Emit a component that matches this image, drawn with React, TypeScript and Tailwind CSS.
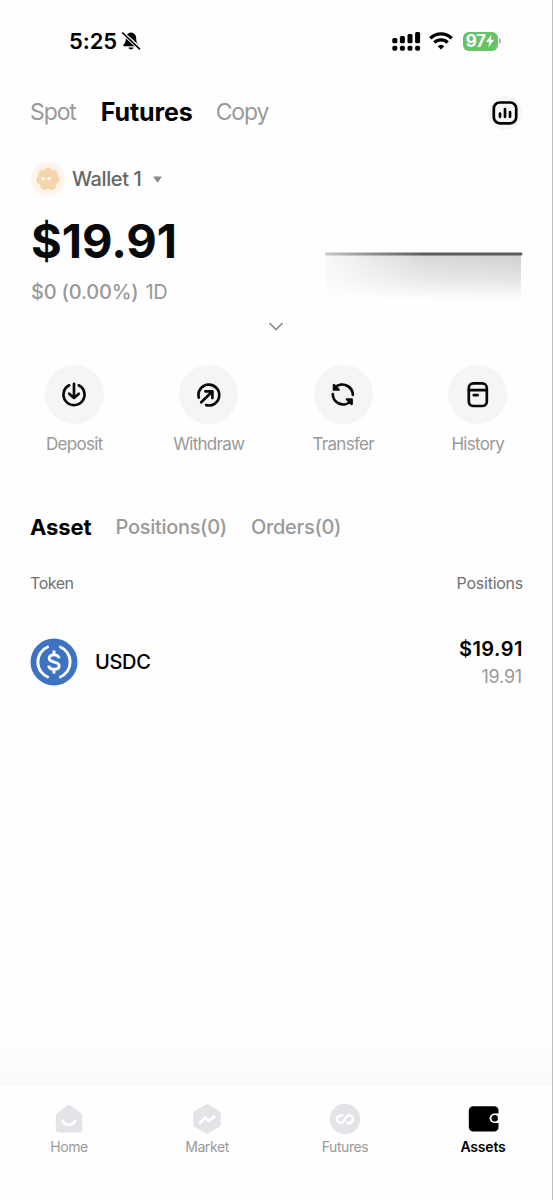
import React from 'react';

type Action = {
    label: string;
    icon: React.ReactNode;
};

type NavItem = Action & { active?: boolean };

const BellOffIcon: React.FC = () => (
    <svg width="20" height="20" viewBox="0 0 20 20" fill="none">
        <path d="M10 1.400c-3.100.4-5.200 2.600-5.200 5.800 0 3.600-.7 4.900-2.200 6.400-.7.800-.4 1.700.6 1.700h13.600c1 0 1.300-.9.6-1.700-1.500-1.500-2.200-2.800-2.200-6.400 0-3.200-2.100-5.400-5.200-5.800z" fill="black" />
        <path d="M7.400 16.500h5.200c-.4 1.200-1.300 1.900-2.600 1.900s-2.200-.7-2.600-1.900z" fill="black" />
        <path d="M1.200 1.600l17.600 16" stroke="white" strokeWidth="3.800" />
        <path d="M1.700 2l16.800 15.800" stroke="black" strokeWidth="1.700" strokeLinecap="round" />
    </svg>
);

const SignalIcon: React.FC = () => (
    <svg width="29" height="20" viewBox="0 0 29 20" fill="black">
        <rect x="0.300" y="7" width="5" height="5.200" rx="1.500" />
        <rect x="7.900" y="5" width="5" height="7.200" rx="1.500" />
        <rect x="15.500" y="3" width="5" height="9.200" rx="1.500" />
        <rect x="23.100" y="1" width="5" height="11.200" rx="1.500" />
        <rect x="0.300" y="14.800" width="5" height="5" rx="1.800" />
        <rect x="7.900" y="14.800" width="5" height="5" rx="1.800" />
        <rect x="15.500" y="14.800" width="5" height="5" rx="1.800" />
        <rect x="23.100" y="14.800" width="5" height="5" rx="1.800" />
    </svg>
);

const WifiIcon: React.FC = () => (
    <svg width="24" height="18" viewBox="0 0 24 18" fill="none" stroke="black" strokeWidth="3.300">
        <path d="M1.300 6.300a15.200 15.200 0 0 1 21.400 0" />
        <path d="M5.300 10.500a9.600 9.600 0 0 1 13.400 0" />
        <path d="M12 17.600l-3.300-3.400a4.800 4.800 0 0 1 6.600 0z" fill="black" stroke="none" />
    </svg>
);

const StatusBar: React.FC = () => (
    <div className="flex h-[82px] items-center justify-between pr-[51px] pl-[69px]">
        <div className="flex items-center gap-1">
            <span className="text-[22px] font-semibold tracking-[-0.1px]">5:25</span>
            <BellOffIcon />
        </div>
        <div className="flex items-center">
            <SignalIcon />
            <span className="ml-2">
                <WifiIcon />
            </span>
            <div className="ml-[10px] flex h-[19px] w-[35px] items-center justify-center rounded-md bg-[#65c466]">
                <span className="pt-px text-[17px] leading-none font-bold tracking-[-0.5px] text-white">97</span>
                <svg width="10" height="14" viewBox="0 0 9 14" fill="white">
                    <path d="M6 0.500L0.500 8h3.300L2.800 13.500 8.600 5.700H5.200z" />
                </svg>
            </div>
            <span className="ml-px h-[6px] w-[2px] rounded-r-full bg-[#b5b5b9]" />
        </div>
    </div>
);

const ChartIcon: React.FC = () => (
    <svg width="26" height="24" viewBox="0 0 26 24" fill="none" stroke="black">
        <rect x="1.800" y="1.500" width="22.400" height="20.800" rx="6" strokeWidth="2.700" />
        <path d="M8 12.500v3.300M13 8.200v7.600M18 11v4.800" strokeWidth="2.700" strokeLinecap="round" />
    </svg>
);

const WalletAvatar: React.FC = () => (
    <svg width="34" height="34" viewBox="0 0 34 34">
        <circle cx="17" cy="17" r="17" fill="#fdf5ed" />
        <g fill="#f6d5ac">
            <circle cx="17" cy="17.500" r="9.500" />
            <circle cx="17" cy="10" r="4.300" />
            <circle cx="22.700" cy="12" r="4" />
            <circle cx="24.700" cy="17.600" r="3.900" />
            <circle cx="20.800" cy="23.800" r="4.300" />
            <circle cx="13.700" cy="23.800" r="4.300" />
            <circle cx="9.300" cy="18" r="3.900" />
            <circle cx="11.300" cy="12" r="4" />
        </g>
        <circle cx="12.200" cy="16.600" r="1.700" fill="white" />
        <circle cx="18.200" cy="16.600" r="1.700" fill="white" />
    </svg>
);

const BalanceChart: React.FC = () => (
    <svg width="198" height="102" viewBox="0 0 198 102">
        <defs>
            <linearGradient id="line" x1="0" x2="1" y1="0" y2="0">
                <stop offset="0" stopColor="#c8c8c8" />
                <stop offset="0.250" stopColor="#8d8d8d" />
                <stop offset="0.500" stopColor="#5c5c5c" />
                <stop offset="1" stopColor="#5c5c5c" />
            </linearGradient>
            <linearGradient id="area" x1="0" x2="1" y1="0" y2="0">
                <stop offset="0" stopColor="#f8f8f8" />
                <stop offset="0.500" stopColor="#d8d8d8" />
                <stop offset="1" stopColor="#d0d0d0" />
            </linearGradient>
            <linearGradient id="fade" x1="0" x2="0" y1="0" y2="1">
                <stop offset="0" stopColor="#fefefe" stopOpacity="0" />
                <stop offset="0.500" stopColor="#fefefe" stopOpacity="0.400" />
                <stop offset="1" stopColor="#fefefe" />
            </linearGradient>
        </defs>
        <rect x="1" y="39" width="195" height="45" fill="url(#area)" />
        <rect x="1" y="39" width="195" height="45" fill="url(#fade)" />
        <rect x="0" y="36.600" width="197.500" height="2.900" rx="1.400" fill="url(#line)" />
    </svg>
);

const iconProps = {
    width: 26,
    height: 26,
    viewBox: '0 0 26 26',
    fill: 'none',
    stroke: '#08090b',
    strokeWidth: 2.7,
    strokeLinecap: 'round',
    strokeLinejoin: 'round',
} as const;

const actions: Action[] = [
    {
        label: 'Deposit',
        icon: (
            <svg {...iconProps}>
                <path d="M8.200 3.300a10.500 10.500 0 1 0 9.600 0" />
                <path d="M13 1.800v13.700M8.200 11.700l4.800 4.200 4.800-4.200" />
            </svg>
        ),
    },
    {
        label: 'Withdraw',
        icon: (
            <svg {...iconProps}>
                <path d="M2.800 15.700A10.400 10.400 0 1 1 10.200 23.100" />
                <path d="M5.200 20.300L16.100 9.700M9.400 9.300h7v6.800" />
            </svg>
        ),
    },
    {
        label: 'Transfer',
        icon: (
            <svg {...iconProps}>
                <path d="M4.600 6.200C8.100 2.200 13.300 1.500 17.600 4c3.500 2 5.100 5.200 5.200 8.800" />
                <path d="M21 18.800c-3.500 4-8.700 4.700-13 2.200-3.500-2-5.100-5.200-5.200-8.800" />
                <path d="M3.800 2.900v4.800h5z" fill="#08090b" strokeWidth="2.200" />
                <path d="M21.800 22.100v-4.800h-5z" fill="#08090b" strokeWidth="2.200" />
            </svg>
        ),
    },
    {
        label: 'History',
        icon: (
            <svg {...iconProps}>
                <rect x="3.800" y="1.400" width="18" height="22.600" rx="4.500" />
                <path d="M3.800 8.200h18M8.800 13.200h3.800" />
            </svg>
        ),
    },
];

const UsdcLogo: React.FC = () => (
    <svg width="48" height="48" viewBox="0 0 48 48" fill="none" stroke="white" strokeWidth="2.900">
        <circle cx="24" cy="24" r="23.500" fill="#3e73c4" stroke="none" />
        <path d="M18.700 8.500a16.500 16.500 0 0 0 0 31M29.300 8.500a16.500 16.500 0 0 1 0 31" />
        <path d="M24 12.600v4M24 31.400v4" />
        <path d="M29 20.300c-.4-2.300-2.200-3.400-5-3.400-2.900 0-4.800 1.300-4.800 3.400 0 5.100 10 2.400 10 7.500 0 2.300-2.100 3.500-5.200 3.500-3.200 0-5-1.300-5.300-3.700" />
    </svg>
);

const navItems: NavItem[] = [
    {
        label: 'Home',
        icon: (
            <svg width="32" height="32" viewBox="0 0 32 32" fill="none">
                <path d="M4.800 9.500L14.300 2.700a3 3 0 0 1 3.400 0l9.500 6.800q2 1.500 2 3.800v13.200a3 3 0 0 1-3 3H5.800a3 3 0 0 1-3-3V13.300q0-2.300 2-3.800z" fill="#e3e4e8" />
                <path d="M9.600 16.800c1.200 6.600 11.600 6.600 12.800 0" stroke="white" strokeWidth="2.800" />
            </svg>
        ),
    },
    {
        label: 'Market',
        icon: (
            <svg width="32" height="32" viewBox="0 0 32 32" fill="none" strokeLinejoin="round">
                <path d="M16 3.700l11.200 6.400v11.800l-11.200 6.400-11.200-6.400V10.100z" fill="#e3e4e8" stroke="#e3e4e8" strokeWidth="5" />
                <path d="M8.300 20.500l6-5.800 3.300 3.300 6.600-5" stroke="white" strokeWidth="2.900" />
            </svg>
        ),
    },
    {
        label: 'Futures',
        icon: (
            <svg width="32" height="32" viewBox="0 0 32 32" fill="none">
                <circle cx="16" cy="16" r="15.200" fill="#e3e4e8" />
                <path d="M14.500 12.200h-2.600a3.900 3.900 0 0 0 0 7.800c4.600 0 3.700-7.800 8.200-7.800a3.900 3.900 0 0 1 0 7.800h-2.600" stroke="white" strokeWidth="2.500" />
            </svg>
        ),
    },
    {
        label: 'Assets',
        active: true,
        icon: (
            <svg width="32" height="32" viewBox="0 0 32 32" fill="none">
                <path d="M6.300 3.200h21a4.200 4.200 0 0 1 4.200 4.200v17a4.200 4.200 0 0 1-4.200 4.200h-21a4.500 4.500 0 0 1-4.500-4.500V7.700a4.500 4.500 0 0 1 4.500-4.500z" fill="black" />
                <path d="M32 10.500h-4.700a4.700 4.700 0 0 0 0 9.400H32z" fill="white" />
                <circle cx="27.700" cy="15.200" r="3.200" fill="black" />
                <path d="M29.500 11.300h2M29.500 19.100h2" stroke="white" strokeWidth="1" />
            </svg>
        ),
    },
];

const App: React.FC = () => {
    return (
        <div className="flex h-[1200px] w-[553px] flex-col overflow-hidden border-r border-[#bdbdbd] bg-[#fefefe] font-['Inter',sans-serif] text-black">
            <StatusBar />

            <div className="flex h-[60px] items-center pt-px pr-[30px] pl-[30px]">
                <span className="text-[23px] tracking-[-1.1px] text-[#999]">Spot</span>
                <span className="ml-[25px] text-[25px] font-bold tracking-[-0.1px]">Futures</span>
                <span className="ml-[23px] text-[23px] tracking-[-1.1px] text-[#999]">Copy</span>
                <div className="ml-auto flex size-[34px] items-center justify-center rounded-full bg-[#f6f6f9]">
                    <ChartIcon />
                </div>
            </div>

            <div className="flex h-[74px] items-center pl-[31px]">
                <WalletAvatar />
                <span className="ml-[7px] text-[20px] font-medium tracking-[-0.4px] text-[#666]">Wallet 1</span>
                <svg className="ml-3" width="9" height="7" viewBox="0 0 9 7" fill="#8a8a8a">
                    <path d="M1 0.500h7q.8 0 .4.800L5.100 6q-.6.700-1.200 0L.6 1.300Q.2.500 1 .5z" />
                </svg>
            </div>

            <div className="flex h-[102px] justify-between pr-[29px] pl-[31px]">
                <div>
                    <div className="flex h-[50px] items-center text-[47px] font-bold text-[#08090b]">$19.91</div>
                    <div className="flex h-[52px] items-center text-[20px] text-[#999]">
                        <span className="font-medium tracking-[-0.2px]">$0 (0.00%)</span>
                        <span className="ml-[7px] tracking-[-0.4px]">1D</span>
                    </div>
                </div>
                <BalanceChart />
            </div>

            <div className="flex h-4 items-center justify-center">
                <svg width="16" height="9" viewBox="0 0 16 9" fill="none">
                    <path d="M1.500 1.200L8 7.500l6.500-6.300" stroke="#8f8f8f" strokeWidth="1.700" />
                </svg>
            </div>

            <div className="mt-[31px] flex pr-[7px] pl-[7px]">
                {actions.map((action) => (
                    <div key={action.label} className="flex flex-1 flex-col items-center">
                        <div className="flex size-[59px] items-center justify-center rounded-full bg-[#f5f5f8]">
                            {action.icon}
                        </div>
                        <span className="flex h-[42px] items-center text-[17px] tracking-[-0.7px] text-[#999]">{action.label}</span>
                    </div>
                ))}
            </div>

            <div className="mt-[38px] flex h-[46px] items-center gap-6 pl-[30px] text-[20px]">
                <span className="text-[22px] font-bold tracking-[-0.1px]">Asset</span>
                <span className="font-medium tracking-[-0.3px] text-[#999]">Positions(0)</span>
                <span className="font-medium tracking-[-0.3px] text-[#999]">Orders(0)</span>
            </div>

            <div className="flex h-[66px] items-center justify-between pr-[29px] pl-[30px] text-[16px] text-[#707070]">
                <span className="tracking-[-0.45px]">Token</span>
                <span className="tracking-[-0.25px]">Positions</span>
            </div>

            <div className="flex h-[92px] items-center pr-[29px] pl-[30px]">
                <UsdcLogo />
                <span className="ml-[17px] text-[20px] font-medium tracking-[-0.3px]">USDC</span>
                <div className="ml-auto flex flex-col items-end pt-[2px]">
                    <span className="text-[20px] leading-7 font-semibold tracking-[0.5px]">$19.91</span>
                    <span className="mr-px text-[18px] leading-7 tracking-[-0.2px] text-[#999]">19.91</span>
                </div>
            </div>

            <div className="mt-auto h-12 bg-linear-to-b from-[#fefefe] to-[#fafafa]" />
            <div className="flex h-[114px] bg-[#fefefe] pt-[17px]">
                {navItems.map((item) => (
                    <div key={item.label} className="flex flex-1 flex-col items-center">
                        {item.icon}
                        <span className={item.active ? 'mt-[2px] text-[14px] leading-5 font-semibold tracking-[-0.2px] text-black' : 'mt-[2px] text-[14px] leading-5 tracking-[-0.4px] text-[#999]'}>
                            {item.label}
                        </span>
                    </div>
                ))}
            </div>
        </div>
    );
};

export default App;
